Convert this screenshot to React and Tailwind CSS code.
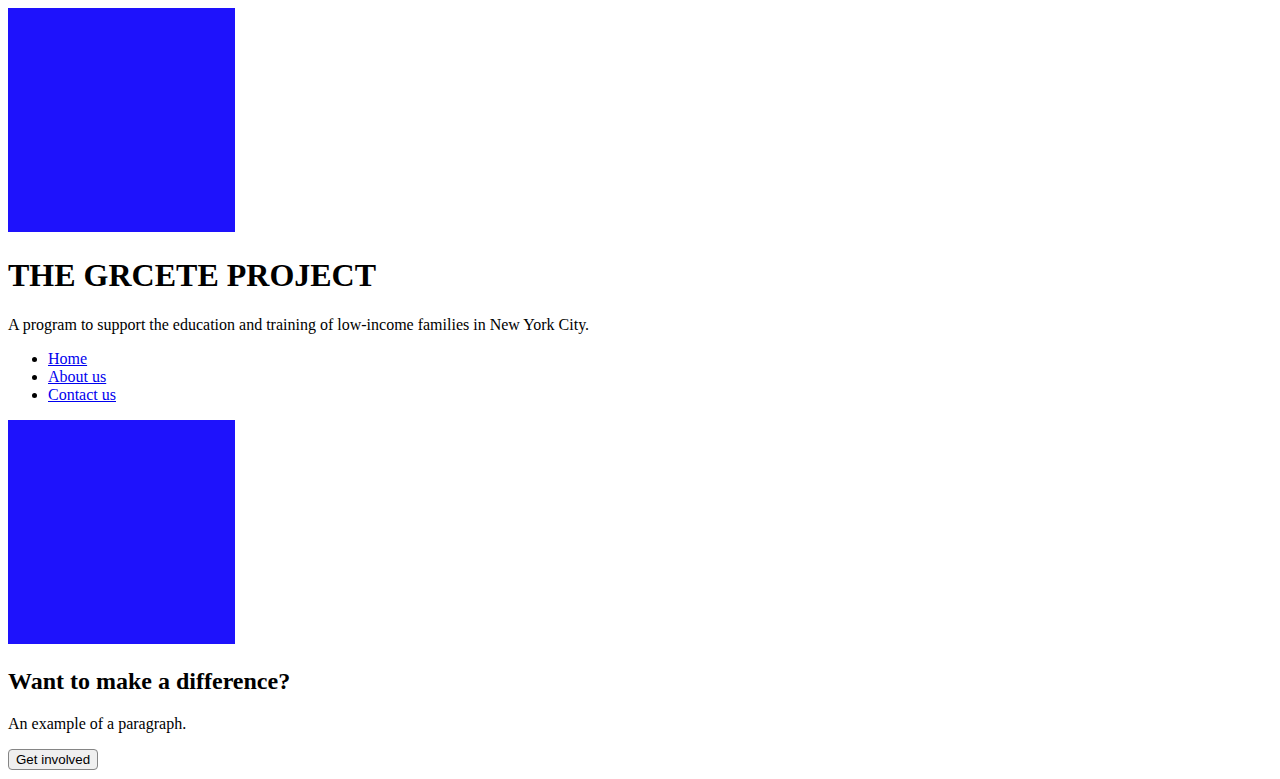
export default function App() {
  return (
    <div className="m-2 font-['Liberation_Serif',serif] text-base leading-[normal] text-black">
      <div>
        <span className="inline-block w-[227px] h-[224px] bg-[#1e12fc]" />
      </div>
      <h1 className="text-[32px] font-bold my-[21.44px]">THE GRCETE PROJECT</h1>
      <p className="my-4">A program to support the education and training of low-income families in New York City.</p>
      <ul className="list-disc pl-10 my-4">
        <li><a href="#" className="text-[#0000ee] underline">Home</a></li>
        <li><a href="#" className="text-[#0000ee] underline">About us</a></li>
        <li><a href="#" className="text-[#0000ee] underline">Contact us</a></li>
      </ul>
      <div>
        <span className="inline-block w-[227px] h-[224px] bg-[#1e12fc]" />
      </div>
      <h2 className="text-[24px] font-bold my-[19.92px]">Want to make a difference?</h2>
      <p className="my-4">An example of a paragraph.</p>
      <button className="font-['Liberation_Sans',Arial,sans-serif] text-[13.33px] leading-[normal] bg-[#efefef] border border-[#858585] rounded-[4px] px-[7px] py-[2px] text-black">
        Get involved
      </button>
    </div>
  );
}
